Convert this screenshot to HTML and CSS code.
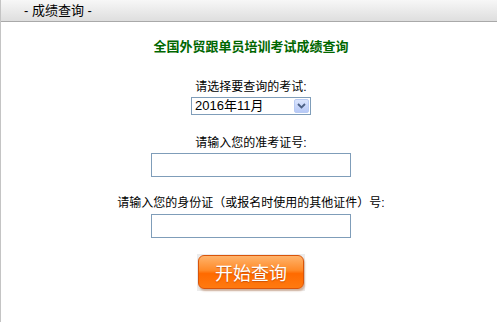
FILE: index.html
```html
<!DOCTYPE html>
<html lang="zh-CN">
<head>
    <meta charset="UTF-8">
    <title>成绩查询</title>
    <link rel="stylesheet" href="styles.css">
</head>
<body>
    <div class="panel">
        <div class="panel-head">- 成绩查询 -</div>
        <form class="query-form" onsubmit="return false;">
            <h2 class="form-title">全国外贸跟单员培训考试成绩查询</h2>

            <label class="field-label" for="exam">请选择要查询的考试:</label>
            <div class="select-box">
                <select id="exam" class="exam-select">
                    <option>2016年11月</option>
                </select>
                <span class="select-arrow">
                    <svg width="9" height="6" viewBox="0 0 9 6">
                        <path d="M1 1 L4.5 4.5 L8 1" fill="none" stroke="#4d6185" stroke-width="1.8"/>
                    </svg>
                </span>
            </div>

            <label class="field-label gap-md" for="zkz">请输入您的准考证号:</label>
            <input id="zkz" class="text-input" type="text">

            <label class="field-label gap-sm" for="sfz">请输入您的身份证（或报名时使用的其他证件）号:</label>
            <input id="sfz" class="text-input" type="text">

            <div class="btn-wrap">
                <button class="btn-query" type="submit">开始查询</button>
            </div>
        </form>
    </div>
</body>
</html>
```

FILE: styles.css
```css
html, body {
    margin: 0;
    padding: 0;
    background-color: #fff;
}
body {
    font-family: "Liberation Sans", "Noto Sans CJK SC", sans-serif;
    color: #000;
}
.panel {
    height: 322px;
    border-left: 1px solid #c4c4c4;
    box-sizing: border-box;
}
.panel-head {
    height: 21px;
    line-height: 22px;
    padding-left: 23px;
    font-size: 13px;
    background: linear-gradient(#f7f7f7, #dedede);
    border-bottom: 1px solid #a9a9a9;
}
.query-form {
    display: flex;
    flex-direction: column;
    align-items: center;
    padding: 17px 0 0 4px;
}
.form-title {
    margin: 0;
    font-size: 13px;
    line-height: 16px;
    font-weight: bold;
    color: #006600;
}
.field-label {
    margin-top: 24px;
    font-size: 12px;
    line-height: 16px;
}
.field-label.gap-md {
    margin-top: 20px;
}
.field-label.gap-sm {
    margin-top: 18px;
}
.select-box {
    display: flex;
    align-items: center;
    width: 120px;
    height: 18px;
    margin-top: 2px;
    border: 1px solid #7f9db9;
    box-sizing: border-box;
    background-color: #fff;
}
.exam-select {
    flex: 1;
    appearance: none;
    -webkit-appearance: none;
    border: none;
    outline: none;
    background: transparent;
    padding: 0 0 0 3px;
    font-family: "Liberation Sans", "Noto Sans CJK SC", sans-serif;
    font-size: 13px;
    height: 16px;
    line-height: 16px;
}
.select-arrow {
    display: flex;
    align-items: center;
    justify-content: center;
    width: 15px;
    height: 14px;
    margin-right: 1px;
    border: 1px solid #b9cbf3;
    border-radius: 2px;
    box-sizing: border-box;
    background: linear-gradient(#dbe5fd, #b7c9f7);
}
.text-input {
    width: 200px;
    height: 24px;
    margin-top: 2px;
    border: 1px solid #7f9db9;
    box-sizing: border-box;
    padding: 0 3px;
    font-size: 12px;
    outline: none;
}
#sfz {
    margin-top: 3px;
}
.btn-wrap {
    margin-top: 16px;
    padding: 1px 1px 2px 1px;
    background-color: #ececec;
}
.btn-query {
    display: block;
    width: 106px;
    height: 34px;
    border: 1px solid #d9540a;
    border-radius: 6px;
    background: linear-gradient(#ffb36b 0%, #ff8a28 45%, #ff6a00 55%, #ff7a10 100%);
    box-shadow: 1px 2px 2px rgba(150, 60, 0, 0.35);
    color: #fff;
    font-family: "Noto Sans CJK SC", sans-serif;
    font-size: 18px;
    line-height: 30px;
    padding: 0;
    text-shadow: 0 1px 1px rgba(170, 60, 0, 0.6);
    cursor: pointer;
}
```
